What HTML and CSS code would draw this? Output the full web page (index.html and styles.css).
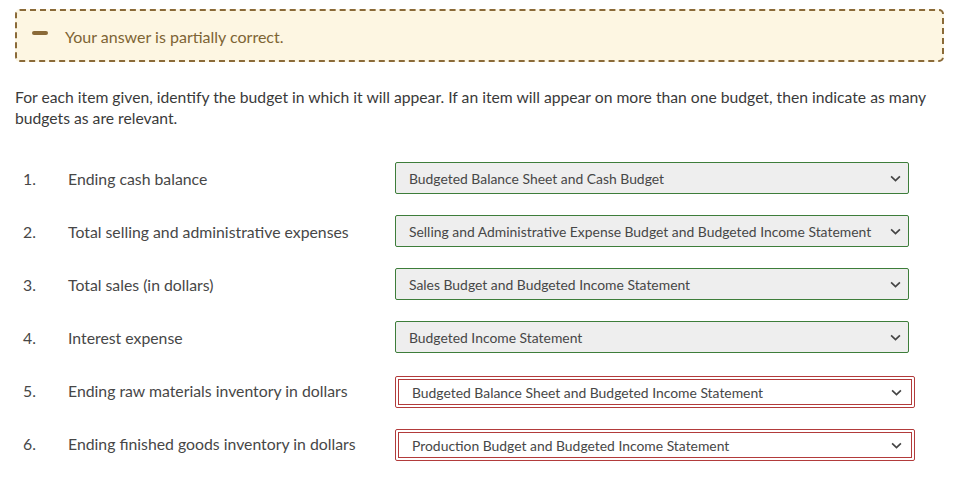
FILE: index.html
```html
<!DOCTYPE html>
<html lang="en">
<head>
    <meta charset="UTF-8">
    <title>Budgets</title>
    <link rel="stylesheet" href="styles.css">
</head>
<body>
    <div class="page">
        <div class="feedback">
            <span class="feedback-icon"></span>
            <span class="feedback-text">Your answer is partially correct.</span>
        </div>

        <p class="prompt">For each item given, identify the budget in which it will appear. If an item will appear on more than one budget, then indicate as many budgets as are relevant.</p>

        <div class="items">
            <div class="item">
                <span class="num">1.</span>
                <span class="label">Ending cash balance</span>
                <div class="pick correct">
                    <select><option>Budgeted Balance Sheet and Cash Budget</option></select>
                    <svg class="chev" viewBox="0 0 10 6"><path d="M1 1l4 4 4-4"/></svg>
                </div>
            </div>
            <div class="item">
                <span class="num">2.</span>
                <span class="label">Total selling and administrative expenses</span>
                <div class="pick correct">
                    <select><option>Selling and Administrative Expense Budget and Budgeted Income Statement</option></select>
                    <svg class="chev" viewBox="0 0 10 6"><path d="M1 1l4 4 4-4"/></svg>
                </div>
            </div>
            <div class="item">
                <span class="num">3.</span>
                <span class="label">Total sales (in dollars)</span>
                <div class="pick correct">
                    <select><option>Sales Budget and Budgeted Income Statement</option></select>
                    <svg class="chev" viewBox="0 0 10 6"><path d="M1 1l4 4 4-4"/></svg>
                </div>
            </div>
            <div class="item">
                <span class="num">4.</span>
                <span class="label">Interest expense</span>
                <div class="pick correct">
                    <select><option>Budgeted Income Statement</option></select>
                    <svg class="chev" viewBox="0 0 10 6"><path d="M1 1l4 4 4-4"/></svg>
                </div>
            </div>
            <div class="item">
                <span class="num">5.</span>
                <span class="label">Ending raw materials inventory in dollars</span>
                <div class="pick wrong">
                    <select><option>Budgeted Balance Sheet and Budgeted Income Statement</option></select>
                    <svg class="chev" viewBox="0 0 10 6"><path d="M1 1l4 4 4-4"/></svg>
                </div>
            </div>
            <div class="item">
                <span class="num">6.</span>
                <span class="label">Ending finished goods inventory in dollars</span>
                <div class="pick wrong">
                    <select><option>Production Budget and Budgeted Income Statement</option></select>
                    <svg class="chev" viewBox="0 0 10 6"><path d="M1 1l4 4 4-4"/></svg>
                </div>
            </div>
        </div>
    </div>
</body>
</html>
```

FILE: styles.css
```css
* { margin: 0; padding: 0; box-sizing: border-box; }
:root {
    --text: #3a3a3a; --muted: #474747;
    --warn: #8a6a38; --warn-text: #7d6434; --warn-bg: #fdf6e2;
    --ok: #3d7d3a; --bad: #b23b3b; --field: #eeeeee;
}
body {
    font-family: Lato, 'Noto Sans', sans-serif;
    color: var(--text); background: #fff;
}
.page { padding: 9px 10px 0 15px; }
.feedback {
    display: flex; align-items: center; gap: 17px;
    height: 53px; padding-left: 15px;
    background: var(--warn-bg); border: 2px dashed var(--warn);
    border-radius: 5px;
}
.feedback-icon {
    width: 16px; height: 4px; border-radius: 2px;
    background: var(--warn); margin-top: -6px;
}
.feedback-text { font-size: 16px; color: var(--warn-text); margin-top: 1px; }
.prompt {
    font-size: 15.7px; line-height: 21px;
    margin-top: 25px; margin-right: 14px;
}
.items { margin-top: 33px; }
.item {
    display: flex; align-items: center;
    height: 32px; margin-bottom: 21px;
}
.num { width: 53px; padding-left: 8px; font-size: 15.8px; color: var(--muted); }
.label { width: 327px; font-size: 15.8px; color: var(--muted); }
.pick { position: relative; }
.pick select {
    appearance: none; -webkit-appearance: none;
    width: 514px; height: 32px; padding: 0 30px 0 13px;
    font-family: inherit; font-size: 13.9px; color: var(--muted);
    border-radius: 2px; outline: none;
}
.pick.correct select { background: var(--field); border: 1px solid var(--ok); }
.pick.wrong {
    margin-top: 3px;
    border: 1px solid var(--bad); border-radius: 2px; padding: 2px;
}
.pick.wrong select {
    height: 26px; background: #fff; border: 1px solid var(--bad);
    border-radius: 0; padding-left: 13px; padding-top: 1px;
}
.chev {
    position: absolute; right: 8px; top: 50%;
    width: 11px; height: 7px; margin-top: -3px;
    fill: none; stroke: #444; stroke-width: 1.5;
}
.pick.wrong .chev { right: 12px; }
```
